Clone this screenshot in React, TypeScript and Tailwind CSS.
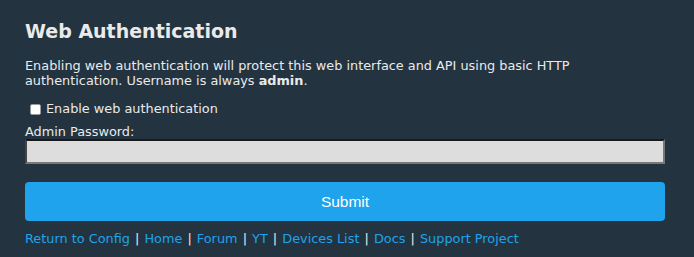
import React from "react";

export default function App() {
  const links = ["Return to Config", "Home", "Forum", "YT", "Devices List", "Docs", "Support Project"];
  return (
    <div className="w-[694px] h-[257px] bg-[#233340] text-[#eaeaea] overflow-hidden" style={{ fontFamily: '"DejaVu Sans", Verdana, sans-serif' }}>
      <div className="w-[640px] ml-[25px] pt-[20px]">
        <h2 className="text-[19px] font-bold leading-[22px]">Web Authentication</h2>
        <p className="mt-[16px] text-[12.85px] leading-[15px]">
          Enabling web authentication will protect this web interface and API using basic HTTP authentication. Username is always <b>admin</b>.
        </p>
        <label className="mt-[13px] h-[16px] flex items-center text-[12.85px] leading-[16px]">
          <span className="ml-[5px] mr-[5px] w-[11px] h-[11px] bg-white border border-[#999] rounded-[2px] inline-block" />
          <span>Enable web authentication</span>
        </label>
        <div className="mt-[7px] text-[12.85px] leading-[15px]">Admin Password:</div>
        <div className="h-[25px] bg-[#dddddd] border-t-2 border-l-2 border-b-2 border-r-2 border-t-[#1a1a1a] border-l-[#444] border-b-[#777] border-r-[#777]" />
        <button className="mt-[18px] block w-full h-[39px] bg-[#1fa3ec] rounded-[4px] text-white text-[15.5px]" style={{ fontFamily: '"Liberation Sans", Arial, sans-serif' }}>
          Submit
        </button>
        <div className="mt-[10px] text-[12.85px] leading-[16px] whitespace-nowrap">
          {links.map((l, i) => (
            <React.Fragment key={l}>
              {i > 0 && <span className="text-[#eaeaea] mx-[1px]">{" | "}</span>}
              <a className="text-[#1fa3ec]">{l}</a>
            </React.Fragment>
          ))}
        </div>
      </div>
    </div>
  );
}
